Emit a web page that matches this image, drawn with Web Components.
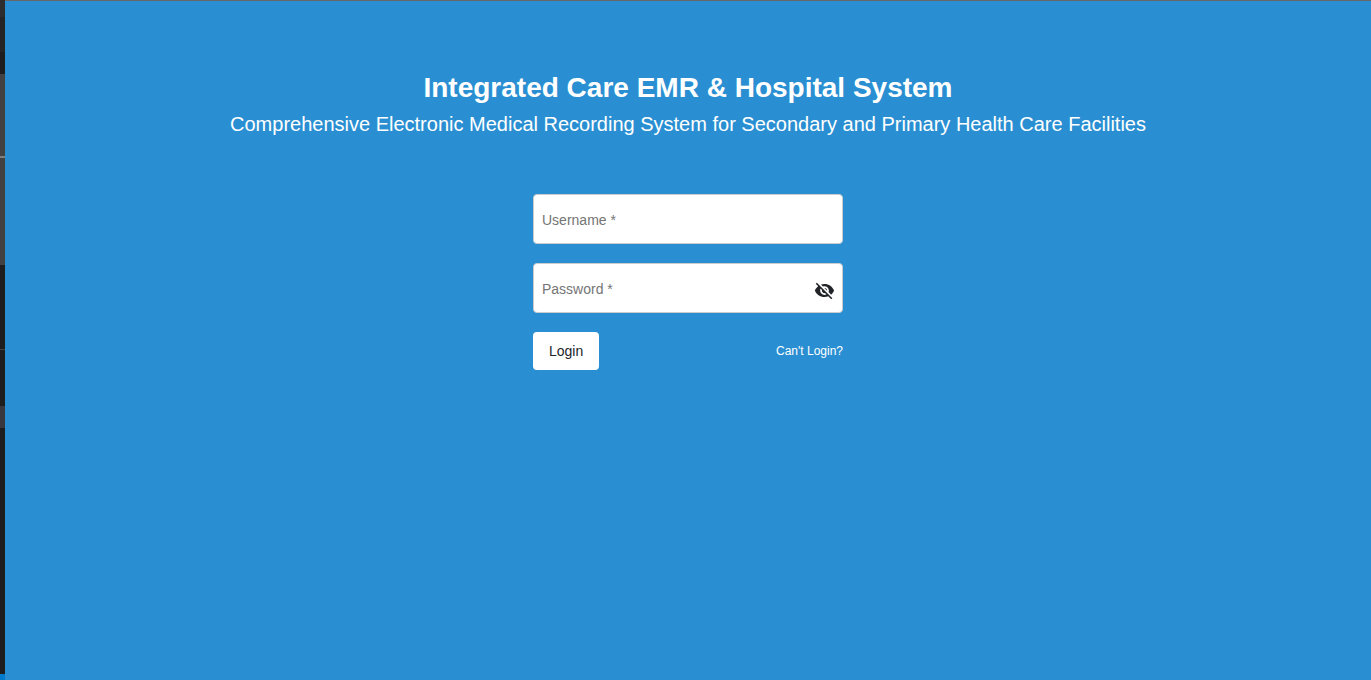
<!DOCTYPE html>
<html lang="en">
<head>
<meta charset="utf-8">
<title>Integrated Care EMR &amp; Hospital System</title>
<style>
  html, body { margin: 0; min-height: 100%; }
  body { font-family: "Liberation Sans", Arial, sans-serif; font-size: 14px; color: #212529; }
</style>
</head>
<body>
<login-page>
  <edge-strip slot="edge"></edge-strip>
  <page-heading>
    Integrated Care EMR &amp; Hospital System
    <span slot="subtitle">Comprehensive Electronic Medical Recording System for Secondary and Primary Health Care Facilities</span>
  </page-heading>
  <login-form></login-form>
</login-page>

<script>
class BaseElement extends HTMLElement {
  constructor() {
    super();
    this.attachShadow({ mode: "open" }).innerHTML = this.view();
  }
}

customElements.define("login-page", class extends BaseElement {
  view() {
    return `
      <style>
        :host { display: flex; min-height: 100vh; }
        main {
          flex: 1; box-sizing: border-box; padding: 69px 16px 32px;
          display: flex; flex-direction: column; align-items: center; gap: 56px;
          background: #2a8fd2; border-top: 1px solid #676767;
        }
      </style>
      <slot name="edge"></slot>
      <main><slot></slot></main>`;
  }
});

/* Sliver of the dark window that shows beside the page */
customElements.define("edge-strip", class extends BaseElement {
  view() {
    const bands = [
      [17, "#2d2d2d"], [35, "#252526"], [22, "#1e1e1e"], [82, "#424242"],
      [2, "#808080"], [107, "#424242"], [84, "#1e1e1e"], [1, "#454545"],
      [56, "#1e1e1e"], [22, "#37373d"], [246, "#1e1e1e"], [6, "#007acc"]
    ];
    return `
      <style>
        :host { display: flex; flex-direction: column; flex: 0 0 5px; }
      </style>
      ${bands.map(([h, c]) => `<div style="flex:${h} 0 0px;background:${c}"></div>`).join("")}`;
  }
});

customElements.define("page-heading", class extends BaseElement {
  view() {
    return `
      <style>
        :host { display: block; text-align: center; color: #fff; }
        h1 { margin: 0 0 4px; font-size: 28px; line-height: 36px; font-weight: 700; }
        p { margin: 0; font-size: 20px; line-height: 28px; }
      </style>
      <h1><slot></slot></h1>
      <p><slot name="subtitle"></slot></p>`;
  }
});

customElements.define("text-field", class extends HTMLElement {
  connectedCallback() {
    if (this.shadowRoot) return;
    const label = this.getAttribute("label");
    const type = this.getAttribute("type") || "text";
    this.attachShadow({ mode: "open" }).innerHTML = `
      <style>
        :host {
          display: flex; align-items: center; box-sizing: border-box; height: 50px;
          background: #fff; border: 1px solid #ccc; border-radius: 4px;
        }
        input {
          flex: 1; min-width: 0; height: 100%; box-sizing: border-box; padding: 2px 8px 0;
          border: 0; outline: 0; background: transparent; color: inherit; font: inherit;
        }
        input::placeholder { color: #757575; opacity: 1; }
        :host(:focus-within) { border-color: #17629a; }
      </style>
      <input type="${type}" required aria-label="${label}" placeholder="${label} *">
      <slot name="action"></slot>`;
  }
  get input() { return this.shadowRoot.querySelector("input"); }
});

customElements.define("login-form", class extends BaseElement {
  view() {
    return `
      <style>
        :host { display: block; width: 310px; max-width: 100%; }
        form { display: flex; flex-direction: column; gap: 19px; }
        .row { display: flex; align-items: center; justify-content: space-between; }
        button { font: inherit; color: inherit; border: 0; background: #fff; cursor: pointer; }
        .submit { height: 38px; padding: 0 16px; border-radius: 4px; }
        .toggle { display: flex; padding: 5px 7px 0 0; background: none; }
        svg { display: block; width: 21px; height: 21px; fill: #212529; }
        a { color: #fff; font-size: 12px; text-decoration: none; }
        a:hover { text-decoration: underline; }
      </style>
      <form>
        <text-field label="Username"></text-field>
        <text-field label="Password" type="password">
          <button class="toggle" slot="action" type="button" aria-label="Show password">
            <svg viewBox="0 0 24 24" aria-hidden="true"><path d="M12 7c2.76 0 5 2.24 5 5 0 .65-.13 1.26-.36 1.83l2.92 2.92c1.51-1.26 2.7-2.89 3.43-4.75-1.73-4.39-6-7.5-11-7.5-1.4 0-2.74.25-3.98.7l2.16 2.16C10.74 7.13 11.35 7 12 7zM2 4.27l2.28 2.28.46.46C3.08 8.3 1.78 10.02 1 12c1.73 4.39 6 7.5 11 7.5 1.55 0 3.03-.3 4.38-.84l.42.42L19.73 22 21 20.73 3.27 3 2 4.27zM7.53 9.8l1.55 1.55c-.05.21-.08.43-.08.65 0 1.66 1.34 3 3 3 .22 0 .44-.03.65-.08l1.55 1.55c-.67.33-1.41.53-2.2.53-2.76 0-5-2.24-5-5 0-.79.2-1.53.53-2.2zm4.31-.78l3.15 3.15.02-.16c0-1.66-1.34-3-3-3l-.17.01z"/></svg>
          </button>
        </text-field>
        <div class="row">
          <button class="submit" type="submit">Login</button>
          <a href="#recover">Can't Login?</a>
        </div>
      </form>`;
  }
  connectedCallback() {
    const toggle = this.shadowRoot.querySelector(".toggle");
    const field = this.shadowRoot.querySelector("[type=password]");
    toggle.addEventListener("click", () => {
      field.input.type = field.input.type === "password" ? "text" : "password";
    });
    this.shadowRoot.querySelector("form").addEventListener("submit", e => e.preventDefault());
  }
});
</script>
</body>
</html>
